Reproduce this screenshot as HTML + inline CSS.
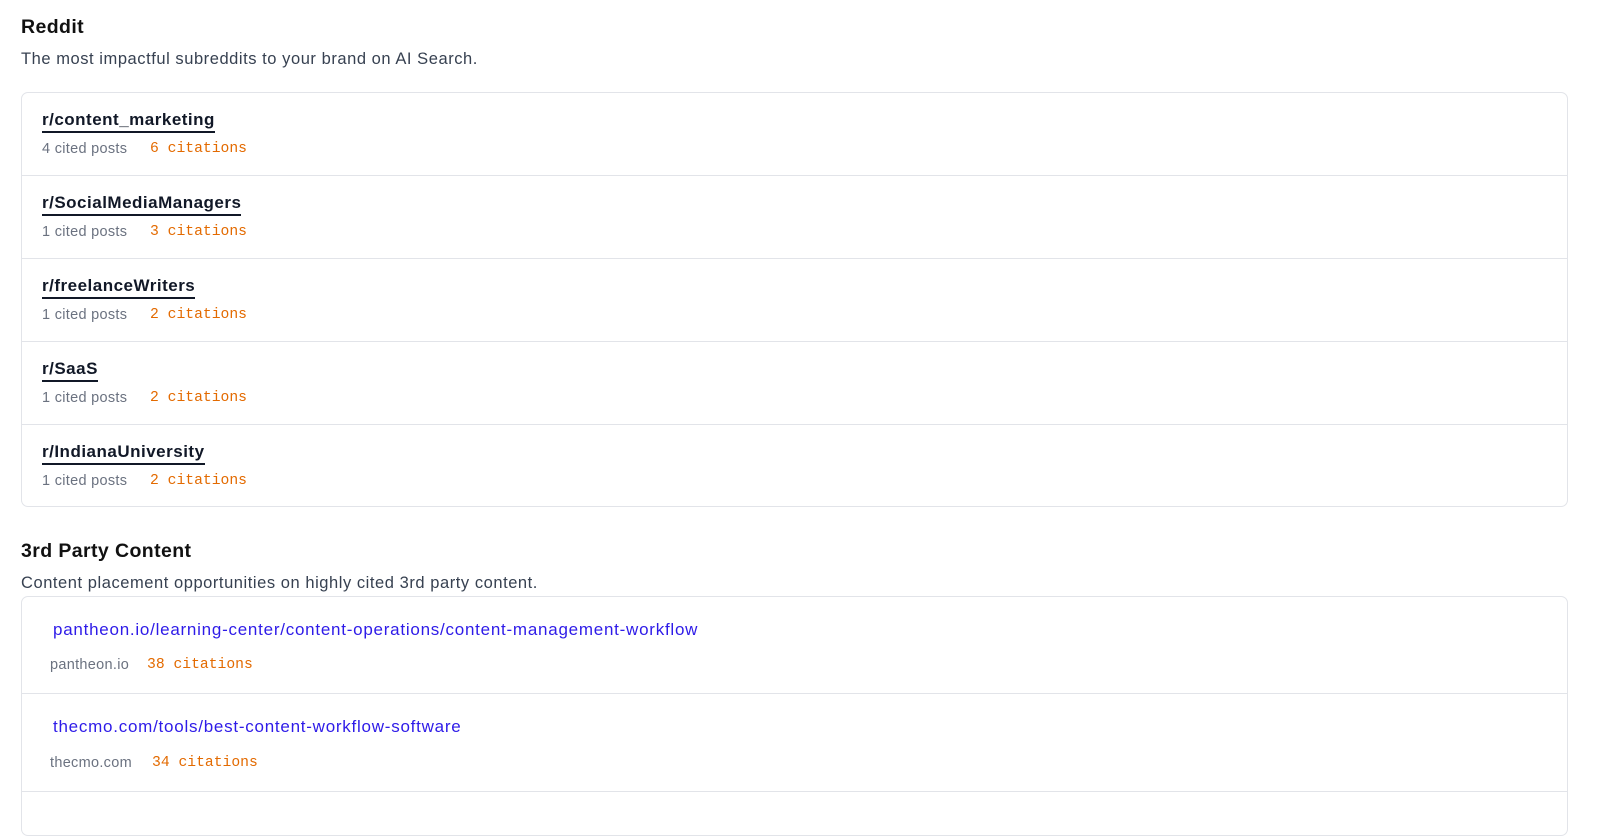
<!DOCTYPE html>
<html><head><style>
body{margin:0;width:1600px;height:809px;overflow:hidden;background:#fff;font-family:"Liberation Sans",sans-serif;position:relative}
.a{position:absolute;white-space:nowrap}
h2{position:absolute;margin:0;font-size:19.5px;letter-spacing:0.4px;font-weight:bold;color:#111}
.sub{font-size:16.5px;letter-spacing:0.55px;color:#374151}
.card{position:absolute;left:21px;width:1547px;border:1px solid #e2e4e9;border-radius:7px;box-sizing:border-box}
.row{position:absolute;left:0;right:0;border-top:1px solid #e2e4e9}
.nm{font-size:17px;letter-spacing:0.5px;font-weight:bold;color:#111827;border-bottom:2px solid #111827;line-height:20px;padding-bottom:1px}
.meta{font-size:14.5px;letter-spacing:0.3px;color:#6b7280}
.cit{font-family:"Liberation Mono",monospace;font-size:14.7px;color:#e36a00}
.lk{font-size:17px;letter-spacing:0.75px;color:#2e1be8}
</style></head><body>
<h2 style="left:21px;top:16px">Reddit</h2>
<div class="a sub" style="left:21px;top:50px">The most impactful subreddits to your brand on AI Search.</div>
<div class="card" style="top:92px;height:415px">
 <div class="row" style="top:0;border-top:none;height:83px"><div class="a nm" style="left:20px;top:17px">r/content_marketing</div><div class="a meta" style="left:20px;top:48px">4 cited posts</div><div class="a cit" style="left:128px;top:48px">6 citations</div></div>
 <div class="row" style="top:82px;height:83px"><div class="a nm" style="left:20px;top:17px">r/SocialMediaManagers</div><div class="a meta" style="left:20px;top:48px">1 cited posts</div><div class="a cit" style="left:128px;top:48px">3 citations</div></div>
 <div class="row" style="top:165px;height:83px"><div class="a nm" style="left:20px;top:17px">r/freelanceWriters</div><div class="a meta" style="left:20px;top:48px">1 cited posts</div><div class="a cit" style="left:128px;top:48px">2 citations</div></div>
 <div class="row" style="top:248px;height:83px"><div class="a nm" style="left:20px;top:17px">r/SaaS</div><div class="a meta" style="left:20px;top:48px">1 cited posts</div><div class="a cit" style="left:128px;top:48px">2 citations</div></div>
 <div class="row" style="top:331px;height:83px"><div class="a nm" style="left:20px;top:17px">r/IndianaUniversity</div><div class="a meta" style="left:20px;top:48px">1 cited posts</div><div class="a cit" style="left:128px;top:48px">2 citations</div></div>
</div>
<h2 style="left:21px;top:540px">3rd Party Content</h2>
<div class="a sub" style="left:21px;top:574px">Content placement opportunities on highly cited 3rd party content.</div>
<div class="card" style="top:596px;height:240px">
 <div class="row" style="top:0;border-top:none;height:97px"><div class="a lk" style="left:31px;top:23px">pantheon.io/learning-center/content-operations/content-management-workflow</div><div class="a meta" style="left:28px;top:60px">pantheon.io</div><div class="a cit" style="left:125px;top:60px">38 citations</div></div>
 <div class="row" style="top:96px;height:98px"><div class="a lk" style="left:31px;top:23px">thecmo.com/tools/best-content-workflow-software</div><div class="a meta" style="left:28px;top:61px">thecmo.com</div><div class="a cit" style="left:130px;top:61px">34 citations</div></div>
 <div class="row" style="top:194px;height:40px"></div>
</div>
</body></html>
